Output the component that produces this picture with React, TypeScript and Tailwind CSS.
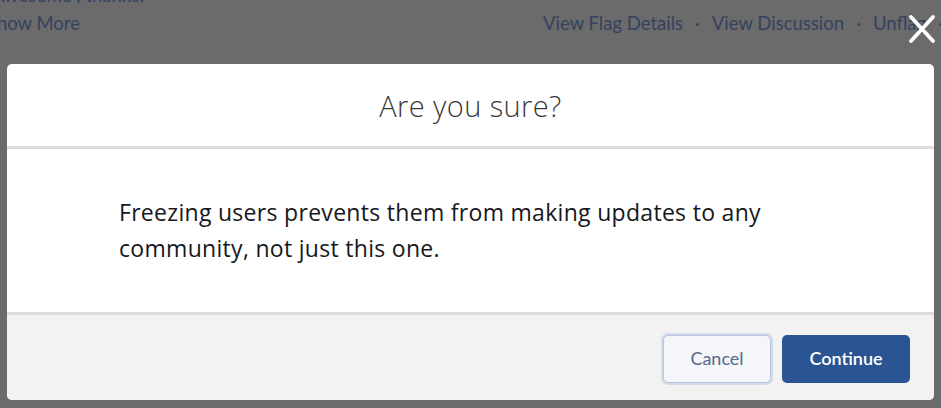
import React from "react";

export default function App() {
  return (
    <div
      className="relative w-[941px] h-[408px] overflow-hidden bg-[#6b6b6b]"
      style={{ fontFamily: 'Lato, "Open Sans", sans-serif' }}
    >
      {/* dimmed page behind */}
      <div className="absolute left-0 top-0 w-full h-[60px] text-[18.5px] text-[#34425f]">
        <div className="absolute left-[-8px] top-[-18px] whitespace-nowrap">Awesome , thanks!</div>
        <div className="absolute left-[-13px] top-[10px] whitespace-nowrap">Show More</div>
        <div className="absolute left-[543px] top-[10px] whitespace-nowrap flex gap-[12px]">
          <span>View Flag Details</span>
          <span>·</span>
          <span>View Discussion</span>
          <span>·</span>
          <span>Unflag</span>
          <span>·</span>
        </div>
      </div>

      {/* close X */}
      <svg
        className="absolute left-[906px] top-[13px]"
        width="32"
        height="32"
        viewBox="0 0 32 32"
      >
        <path d="M5 4 L27 28 M27 4 L5 28" stroke="#ffffff" strokeWidth="3.8" strokeLinecap="round" />
      </svg>

      {/* modal */}
      <div className="absolute left-[7px] top-[64px] w-[927px] h-[336px] rounded-[5px] overflow-hidden flex flex-col bg-white">
        <div className="h-[85px] flex items-center justify-center border-b-[3px] border-[#dddddd] pt-[2px]">
          <h2
            className="text-[29px] font-light tracking-[0.4px] text-[#3a3a3a]"
            style={{ fontFamily: '"Open Sans", Lato, sans-serif' }}
          >
            Are you sure?
          </h2>
        </div>
        <div
          className="h-[163px] pl-[112px] pt-[45px] text-[23px] leading-[36px] tracking-[0.3px] text-[#16181b]"
          style={{ fontFamily: '"Open Sans", Lato, sans-serif' }}
        >
          <p>Freezing users prevents them from making updates to any</p>
          <p>community, not just this one.</p>
        </div>
        <div className="flex-1 bg-[#f3f2f2] border-t-[3px] border-[#dddddd] flex items-center justify-end gap-[11px] pr-[24px] pt-[2px]">
          <button className="w-[108px] h-[48px] rounded-[5px] bg-[#f4f6f9] border border-[#b6c4d8] shadow-[0_0_0_2px_#d3dcea] text-[18px] text-[#54698d]">
            Cancel
          </button>
          <button className="w-[128px] h-[48px] rounded-[5px] bg-[#2a5592] text-[18px] font-semibold text-white">
            Continue
          </button>
        </div>
      </div>
    </div>
  );
}
